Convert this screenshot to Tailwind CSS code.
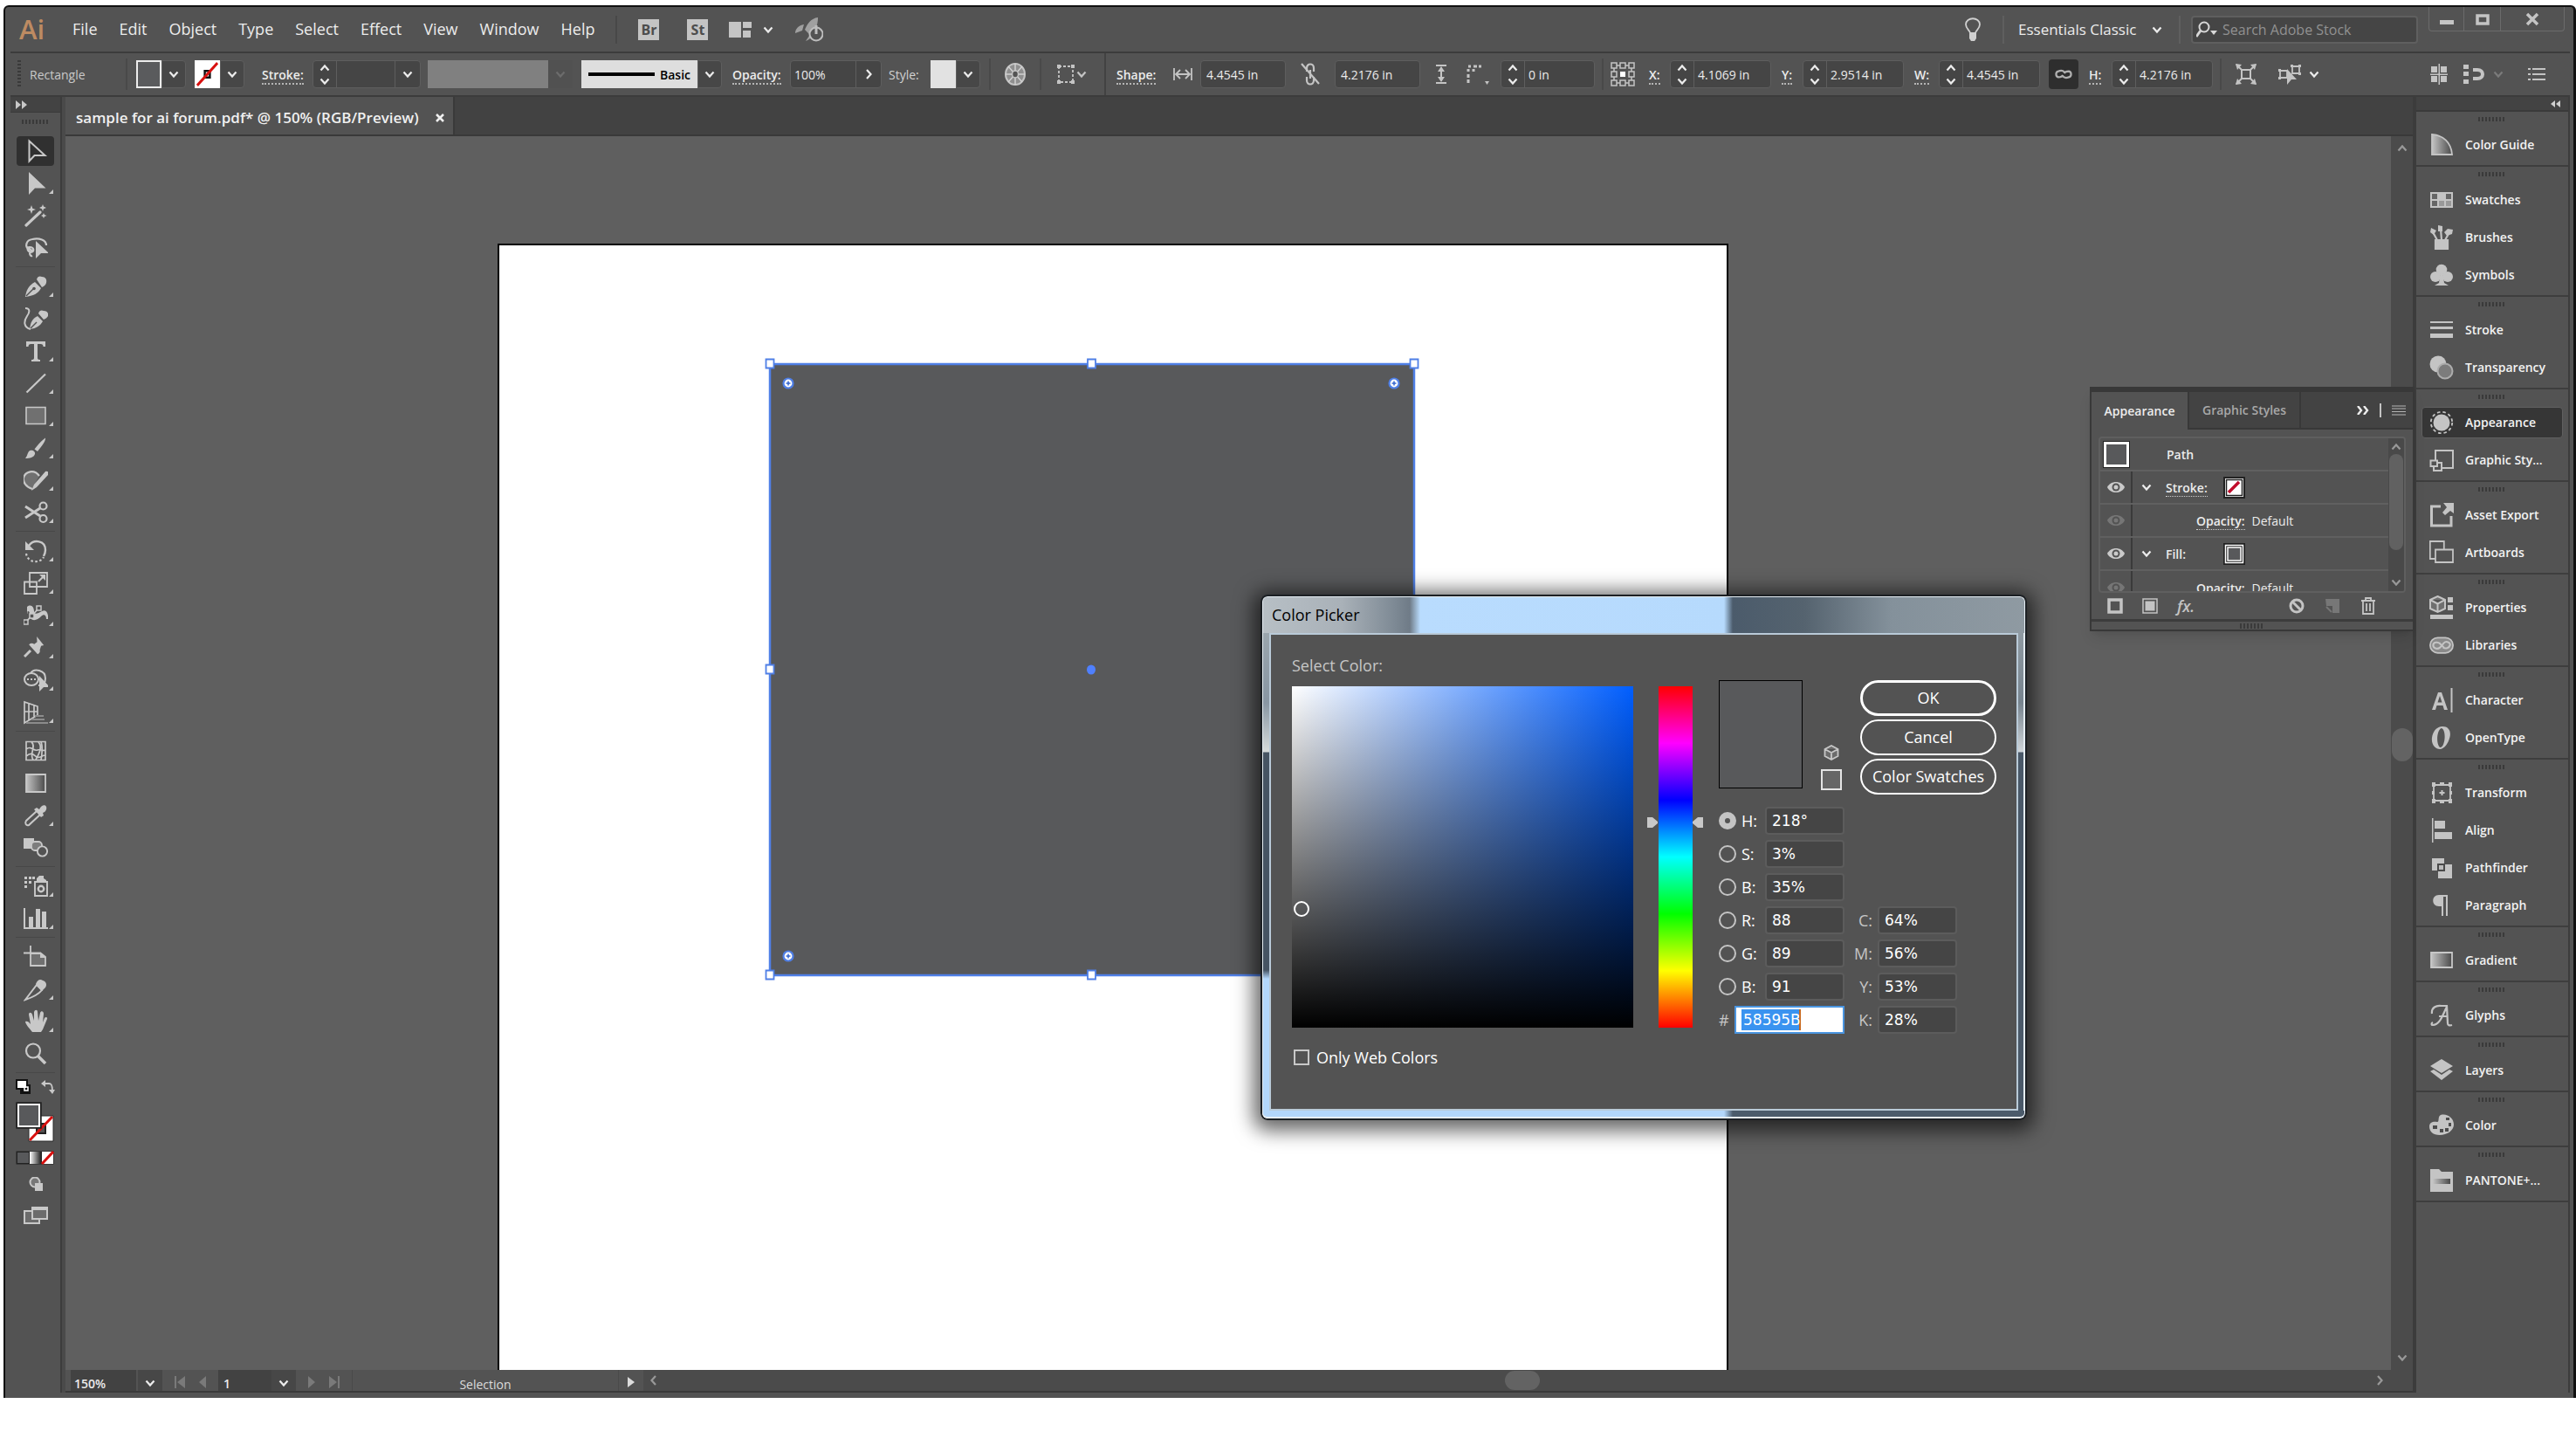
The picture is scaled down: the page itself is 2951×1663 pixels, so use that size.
<!DOCTYPE html>
<html lang="en">
<head>
    <meta charset="UTF-8">
    <meta name="viewport" content="width=device-width, initial-scale=1.0">
    <title>sample for ai forum.pdf - Illustrator</title>
    <script src="https://cdn.jsdelivr.net/npm/@tailwindcss/browser@4"></script>
</head>
<body class="bg-white h-screen flex flex-col pt-1.5 pl-1 pb-[62px] font-['Open_Sans','Noto_Sans',sans-serif] text-[14px] text-[#ececec]">

    <!-- Icon sprite -->
    <svg class="absolute w-0 h-0" aria-hidden="true">
        <defs>
            <linearGradient id="g-lr"><stop offset="0" stop-color="#c4c4c4"/><stop offset="1" stop-color="#4a4a4a"/></linearGradient>
            <linearGradient id="g-wb"><stop offset="0" stop-color="#fff"/><stop offset="1" stop-color="#222"/></linearGradient>
        </defs>
        <!-- arrows -->
        <symbol id="down" viewBox="0 0 12 12"><path d="M1.500 3.500 6 8.500l4.500-5" fill="none" stroke="currentColor" stroke-width="2.200"/></symbol>
        <symbol id="up" viewBox="0 0 12 12"><path d="M1.500 8.500 6 3.500l4.500 5" fill="none" stroke="currentColor" stroke-width="2.200"/></symbol>
        <symbol id="right" viewBox="0 0 12 12"><path d="M4 1l4.500 5L4 11" fill="none" stroke="currentColor" stroke-width="2.200"/></symbol>
        <symbol id="left" viewBox="0 0 12 12"><path d="M8 1L3.500 6 8 11" fill="none" stroke="currentColor" stroke-width="2.200"/></symbol>
        <symbol id="none" viewBox="0 0 30 30" preserveAspectRatio="none"><path d="M0 0h30v30H0z" fill="#fff"/><path d="M12 11.500h6v7h-6z" fill="#fff" stroke="#111" stroke-width="2.500"/><path d="M3 27 27 3" stroke="#d8100f" stroke-width="3"/></symbol>
        <!-- tools -->
        <symbol id="t-select" viewBox="0 0 28 28"><path d="M6.500 2.500v23l6-6.500h12z" fill="none" stroke="currentColor" stroke-width="2"/></symbol>
        <symbol id="t-direct" viewBox="0 0 28 28"><path d="M6 1v26l7-7.500h12.500z" fill="currentColor"/></symbol>
        <symbol id="t-wand" viewBox="0 0 28 28"><path d="M3 25 19 10" stroke="currentColor" stroke-width="3.200" stroke-linecap="round"/><path d="M9 2l1.300 3.700L14 7l-3.700 1.300L9 12 7.700 8.300 4 7l3.700-1.300zM22 1l1 2.500L26 5l-3 1.200L22 9l-1-2.800L18 5l3-1.500zM23 11l1 2 2.500 1-2.500 1-1 2-1-2-2-1 2-1z" fill="currentColor"/></symbol>
        <symbol id="t-lasso" viewBox="0 0 28 28"><path d="M6 16C1 12 3 5 10 4c8-2 16 1 16 7M9 19c-5-1-6-6-2-6 5 0 6 5 1 6-2 1 0 5 2 4M5 14l6 4" fill="none" stroke="currentColor" stroke-width="2.200"/><path d="M14 6v20l6-6h9z" fill="currentColor"/></symbol>
        <symbol id="t-pen" viewBox="0 0 28 28"><path d="M2 26c1-8 4-13 11-17l7 7c-3 6-9 9-18 10z" fill="currentColor"/><path d="M3 25l8-8" stroke="#535353" stroke-width="1.500"/><circle cx="12" cy="16.500" r="1.800" fill="#535353"/><path d="M15 6c1-4 4-4 6-3 4 0 6 3 5 7-1 3-3 4-5 5z" fill="currentColor"/></symbol>
        <symbol id="t-curv" viewBox="0 0 28 28"><path d="M7 26c1-8 3-12 9-15l6 6c-3 5-7 8-15 9z" fill="currentColor"/><path d="M8 25l7-7" stroke="#535353" stroke-width="1.400"/><path d="M17 8c1-4 4-4 6-3 4 0 6 3 5 6-1 2-3 3-5 4z" fill="currentColor"/><path d="M2 2c6 0 5 5 2 9-4 6-4 13 4 15" fill="none" stroke="currentColor" stroke-width="2"/></symbol>
        <symbol id="t-type" viewBox="0 0 28 28"><path d="M3 3h22v6h-2.500c0-2-1-3-3-3H16v16c0 1.500 1 2 3 2v2H9v-2c2 0 3-.5 3-2V6H8.500c-2 0-3 1-3 3H3z" fill="currentColor"/></symbol>
        <symbol id="t-line" viewBox="0 0 28 28"><path d="M3.500 24.500 25 3.500" stroke="currentColor" stroke-width="2.200"/></symbol>
        <symbol id="t-rect" viewBox="0 0 28 28"><path d="M3 4.500h22v19H3z" fill="#707070" stroke="currentColor" stroke-width="1.600"/></symbol>
        <symbol id="t-brush" viewBox="0 0 28 28"><path d="M2 26c2-2 2-5 4-8 3-3 8 0 7 3-1 4-6 5-11 5z" fill="currentColor"/><path d="M12.500 15.500C16 11 20 6 25 2.500c.5 4-4 9-9 15.500z" fill="currentColor"/></symbol>
        <symbol id="t-shaper" viewBox="0 0 28 28"><path d="M10 24C3 22-1 16 0 11 2 4 12 1 18 9" fill="#707070" stroke="currentColor" stroke-width="2.200"/><path d="M9 26l3-7L25 4c2-1 5 1 4 3L15 22z" fill="currentColor"/></symbol>
        <symbol id="t-sciss" viewBox="0 0 28 28"><path d="M2 7l17 11M2 20 19 9" stroke="currentColor" stroke-width="3"/><ellipse cx="22.500" cy="6.500" rx="4" ry="4" fill="none" stroke="currentColor" stroke-width="2.200"/><ellipse cx="22.500" cy="21" rx="4" ry="4" fill="none" stroke="currentColor" stroke-width="2.200"/></symbol>
        <symbol id="t-rotate" viewBox="0 0 28 28"><path d="M6 8C12 0 25 2 25 13c0 3-1 5-2 7" fill="none" stroke="currentColor" stroke-width="2.400"/><path d="M2 3v10h10z" fill="currentColor"/><path d="M3 17c2 12 17 11 20 4" fill="none" stroke="currentColor" stroke-width="2.200" stroke-dasharray="2.500 2.500"/></symbol>
        <symbol id="t-scale" viewBox="0 0 28 28"><path d="M7 2h20v16H7zM1 12.500h14V26H1z" fill="none" stroke="currentColor" stroke-width="1.800"/><path d="M17 12l5-5" stroke="currentColor" stroke-width="2"/><path d="M18 4h7v7z" fill="currentColor"/></symbol>
        <symbol id="t-width" viewBox="0 0 28 28"><path d="M4 4c5-4 8 1 8 5s4 3 9 0c4-2 6 0 7 5v4h-2c0-5-3-6-6-3-4 4-9 6-12 2-2-3 0-8-3-8-1 0 0 3-1 3z" fill="currentColor"/><path d="M2 22 18 5" stroke="currentColor" stroke-width="1.800"/><path d="M0 19h5v5H0zM7 12h5v5H7zM15 3h5v5h-5z" fill="#535353" stroke="currentColor" stroke-width="1.500"/></symbol>
        <symbol id="t-puppet" viewBox="0 0 28 28"><path d="M14 1l9 9-3 1-1 5c1 2 0 4-2 5L6 11c2-2 4-2 6-1l3-3z" fill="currentColor" transform="rotate(6 14 12)"/><path d="M8 17 1 24" stroke="currentColor" stroke-width="3"/></symbol>
        <symbol id="t-builder" viewBox="0 0 28 28"><ellipse cx="9" cy="13" rx="8" ry="7" fill="none" stroke="currentColor" stroke-width="2"/><path d="M8 6c4-6 17-4 17 6 0 5-3 8-8 8" fill="none" stroke="currentColor" stroke-width="2"/><path d="M4 13h14" stroke="currentColor" stroke-width="1.800" stroke-dasharray="2 2"/><path d="M18 9v18l5-5h7z" fill="currentColor"/></symbol>
        <symbol id="t-persp" viewBox="0 0 28 28"><path d="M1 2v24l15-9V7zM1 13h15M6 3.500v19M12 5.500v13" fill="none" stroke="currentColor" stroke-width="1.700"/><path d="M13 18h10M9 22h15M3 26h26" stroke="#8c8c8c" stroke-width="1.800"/></symbol>
        <symbol id="t-mesh" viewBox="0 0 28 28"><path d="M3 3.500h22v21H3zM3 12c6-5 8 3 13 1s5 2 9 0M3 20c6-5 8-2 12 1 3 2 6-2 10-2M9 4c6 4-3 14 2 20M17 4c5 5 1 13-3 20M20 4c2 4 1 16 0 20" fill="none" stroke="currentColor" stroke-width="1.700"/></symbol>
        <symbol id="t-grad" viewBox="0 0 28 28"><path d="M3 4h22v20H3z" fill="url(#g-lr)" stroke="#c8c8c8" stroke-width="1.800"/></symbol>
        <symbol id="t-eye" viewBox="0 0 28 28"><path d="M15 9 3 20c-2 3 0 6 3 5l13-12" fill="none" stroke="currentColor" stroke-width="2"/><path d="M12 7l3-2 3 2c2-5 7-6 8-3s-1 6-4 7l1 3-3 2z" fill="currentColor"/></symbol>
        <symbol id="t-blend" viewBox="0 0 28 28"><path d="M0 3h12v12H0z" fill="currentColor"/><rect x="9" y="7" width="12" height="10" rx="4" fill="#7d7d7d" stroke="currentColor" stroke-width="1.800"/><circle cx="21.500" cy="18" r="5.600" fill="#535353" stroke="currentColor" stroke-width="1.900"/></symbol>
        <symbol id="t-spray" viewBox="0 0 28 28"><path d="M13 9h14v16H13z" fill="none" stroke="currentColor" stroke-width="1.900"/><path d="M15 5l3-3h5v3l3 2v2H15z" fill="currentColor"/><circle cx="20" cy="17" r="3.200" fill="none" stroke="currentColor" stroke-width="2.400"/><path d="M1 3h3v3H1zM6 3h3v3H6zM10 3h3v3h-3zM1 8h3v3H1zM6 8h3v3H6zM1 13h3v3H1z" fill="currentColor"/></symbol>
        <symbol id="t-graph" viewBox="0 0 28 28"><path d="M0 2h2v22h26v2H0zM6 12h5v12H6zM14 3h5v21h-5zM21 6h5v18h-5z" fill="currentColor"/></symbol>
        <symbol id="t-artb" viewBox="0 0 28 28"><path d="M8 10h12l5 4v10H8z" fill="#707070" stroke="currentColor" stroke-width="1.800"/><path d="M0 9.500h20M8 1v9" stroke="currentColor" stroke-width="1.800"/><path d="M19 9v6h7z" fill="currentColor"/></symbol>
        <symbol id="t-slice" viewBox="0 0 28 28"><path d="M2 26 15 9l6 6c-4 5-10 8-19 11z" fill="none" stroke="currentColor" stroke-width="2"/><path d="M14 8c2-5 5-6 8-4 4 1 5 5 3 8l-4 4z" fill="currentColor"/></symbol>
        <symbol id="t-hand" viewBox="0 0 28 28"><path d="M10 26c-3-4-8-9-8-12 2-1 4 0 6 3L6 6c0-3 3-3 4 0l2 7V3c1-3 4-3 4 0l1 10 2-9c1-3 4-2 4 1l-1 10 2-5c1-2 4-1 3 1l-5 12-2 3z" fill="currentColor"/></symbol>
        <symbol id="t-zoom" viewBox="0 0 28 28"><ellipse cx="11" cy="10.500" rx="8" ry="8" fill="none" stroke="currentColor" stroke-width="2.200"/><path d="M16.500 16.500 25 25" stroke="currentColor" stroke-width="3.600"/></symbol>
        <!-- dock panels -->
        <symbol id="p-guide" viewBox="0 0 28 28"><path d="M3 2c13 1 22 9 23 23H3z" fill="url(#g-lr)" stroke="#c4c4c4" stroke-width="1.800"/></symbol>
        <symbol id="p-swatches" viewBox="0 0 28 28"><path d="M1 5h26v18H1z" fill="currentColor"/><path d="M3 7h6v6H3zM19 7h6v6h-6zM3 15h6v6H3z" fill="#666"/><path d="M11 15h6v6h-6zM19 15h6v6h-6z" fill="#999"/></symbol>
        <symbol id="p-brushes" viewBox="0 0 28 28"><path d="M7 17h14v11H7zM3 6l6 11M13 4l1 13M23 8l-5 9" fill="currentColor" stroke="currentColor" stroke-width="2.200"/><path d="M2 3l6 3-3 5-4-3zM10 0l5 1v6h-5zM17 8l4-4 6 1-1 5-6 2z" fill="currentColor"/></symbol>
        <symbol id="p-symbols" viewBox="0 0 28 28"><circle cx="14" cy="8" r="6.300" fill="currentColor"/><circle cx="7" cy="16" r="6" fill="currentColor"/><circle cx="21" cy="16" r="6" fill="currentColor"/><path d="M12.500 12h3l1.500 11 5 3H6l5-3z" fill="currentColor"/></symbol>
        <symbol id="p-stroke" viewBox="0 0 28 28"><path d="M1 4h26v2H1zM1 10h26v3H1zM1 18h26v5H1z" fill="currentColor"/></symbol>
        <symbol id="p-transp" viewBox="0 0 28 28"><circle cx="10" cy="10" r="9.500" fill="currentColor"/><circle cx="18" cy="18" r="8.500" fill="#7c7c7c" stroke="#adadad" stroke-width="2"/></symbol>
        <symbol id="p-appear" viewBox="0 0 28 28"><circle cx="14" cy="14" r="9.500" fill="currentColor"/><circle cx="14" cy="14" r="12.200" fill="none" stroke="currentColor" stroke-width="1.800" stroke-dasharray="3.500 3"/></symbol>
        <symbol id="p-styles" viewBox="0 0 28 28"><path d="M7 14V3h20v20H14" fill="none" stroke="currentColor" stroke-width="2"/><path d="M1.500 14.500H9V21H1.500zM5 21v5h9v-9H9" fill="none" stroke="currentColor" stroke-width="2"/></symbol>
        <symbol id="p-export" viewBox="0 0 28 28"><path d="M13 4H2.500v22H25V15" fill="none" stroke="currentColor" stroke-width="3"/><path d="M16 0h12v12l-4-3-6 5-3-3 5-6z" fill="currentColor"/></symbol>
        <symbol id="p-artboards" viewBox="0 0 28 28"><path d="M7 21H.8V1h16v9M7 10.500h20V25H7z" fill="none" stroke="currentColor" stroke-width="1.800"/></symbol>
        <symbol id="p-props" viewBox="0 0 28 28"><path d="M9.500 1 18 5v10l-8.500 4L1 15V5zM1 5l8.500 4.500L18 5M9.500 9.500V19" fill="#6f6f6f" stroke="currentColor" stroke-width="2"/><path d="M21 2h6v6h-6zM21 11h6v6h-6zM1 22h26v5H1z" fill="currentColor"/></symbol>
        <symbol id="p-libs" viewBox="0 0 32 28"><rect x="1" y="4" width="30" height="20" rx="10" fill="#8a8a8a" stroke="currentColor" stroke-width="2"/><path d="M19 17l-5-5c-3-3-9-2-9 2s5 6 9 3l5-6c3-3 9-1 8 3s-6 5-9 3" fill="none" stroke="currentColor" stroke-width="2.400"/></symbol>
        <symbol id="p-char" viewBox="0 0 28 28"><path d="M3 25 10 5h4l7 20h-4l-1.500-5h-7L7 25zM9.500 16.500h5L12 9z" fill="currentColor" fill-rule="evenodd"/><path d="M25.500 0v28" stroke="currentColor" stroke-width="2"/></symbol>
        <symbol id="p-open" viewBox="0 0 28 28"><path d="M15 1c7 0 10 5 8.500 12S17 27 12 27 2 22 3 14 9 1 15 1zm-1 2C9 4 7 20 12 25c6 1 8-20 2-22z" fill="currentColor" fill-rule="evenodd"/></symbol>
        <symbol id="p-transform" viewBox="0 0 28 28"><path d="M5 5h19v18H5z" fill="none" stroke="currentColor" stroke-width="1.800"/><path d="M3 2h4v5H3zM12 2h5v4h-5zM22 2h4v5h-4zM3 21h4v5H3zM12 22h5v4h-5zM22 21h4v5h-4zM3 12h3v4H3zM23 12h3v4h-3zM13.500 11h2v2h2v2h-2v2h-2v-2h-2v-2h2z" fill="currentColor"/></symbol>
        <symbol id="p-align" viewBox="0 0 28 28"><path d="M3 0h1.500v28H3zM6 3h12v9H6zM6 16h20v8H6z" fill="currentColor"/></symbol>
        <symbol id="p-path" viewBox="0 0 28 28"><path d="M3 3h14v14H3zM10 10h16v16H10z" fill="currentColor"/><path d="M10 10h7v7h-7z" fill="#bbb" stroke="#4a4a4a" stroke-width="2"/></symbol>
        <symbol id="p-para" viewBox="0 0 28 28"><path d="M11 2h10v24h-2V4h-3v22h-2V15h-3C2 15 2 2 11 2z" fill="currentColor"/></symbol>
        <symbol id="p-grad" viewBox="0 0 28 28"><path d="M2 5h24v17H2z" fill="url(#g-lr)" stroke="#c8c8c8" stroke-width="1.800"/></symbol>
        <symbol id="p-glyphs" viewBox="0 0 28 28"><path d="M3 12C2 5 8 2 14 3h7M20 3l1 20c0 2 2 3 5 2M20 4C15 14 12 25 4 25c-2 0-2-2 0-3M11 15h10" fill="none" stroke="currentColor" stroke-width="2.200"/></symbol>
        <symbol id="p-layers" viewBox="0 0 28 28"><path d="M14 1l13 8-13 8L1 9z" fill="currentColor"/><path d="M1 15l4-2 9 6 9-6 4 2-13 10z" fill="currentColor"/></symbol>
        <symbol id="p-color" viewBox="0 0 28 28"><path d="M0 15c0-5 5-6 9-5 3 0 0-6 4-8 8-2 15 4 15 11S20 25 12 25 0 21 0 15z" fill="currentColor"/><path d="M4 14h5v4H4zM12 18h4v4h-4zM18 17h4v4h-4zM22 11h3v4h-3zM19 5h4v3h-4z" fill="#4c4c4c"/></symbol>
        <symbol id="p-pantone" viewBox="0 0 28 28"><path d="M1 1h10l3 3h13v23H1z" fill="currentColor"/><path d="M4 12h20v6H4z" fill="url(#g-lr)"/></symbol>
        <symbol id="eye" viewBox="0 0 20 14"><path d="M0 7C4-1 16-1 20 7 16 15 4 15 0 7z" fill="currentColor"/><circle cx="10" cy="7" r="4.500" fill="#535353"/><circle cx="10" cy="7" r="2.500" fill="currentColor"/></symbol>
        <symbol id="chain" viewBox="0 0 24 14"><path d="M13 4C11 2 8 2 5 3c-4 1-4 7 0 8 3 0 5 0 6-3M11 10c2 2 5 2 8 1 4-1 4-7 0-8-3 0-5 0-6 3" fill="none" stroke="currentColor" stroke-width="2.600"/></symbol>
    </svg>

    <!-- Application window -->
    <div class="relative flex-1 min-h-0 flex flex-col bg-[#535353] border-t-2 border-l-2 border-r-[3px] border-[#111] pl-1.5 pr-1 pb-1.5 rounded-t-md">

        <!-- Menu bar -->
        <header class="h-[51px] shrink-0 flex items-center text-[18px]">
            <span class="ml-2.5 w-[61px] text-[31px] leading-none font-semibold text-[#bd8b62]">Ai</span>
            <nav class="flex gap-[25px]" aria-label="Main menu">
                <button>File</button><button>Edit</button><button>Object</button><button>Type</button><button>Select</button><button>Effect</button><button>View</button><button>Window</button><button>Help</button>
            </nav>
            <span class="ml-6 w-0.5 h-8 bg-[#484848]"></span>
            <button class="ml-6 w-6 h-6 bg-[#c4c4c4] text-[#4d4d4d] text-[16px] leading-none font-bold">Br</button>
            <button class="ml-8 w-6 h-6 bg-[#c4c4c4] text-[#4d4d4d] text-[16px] leading-none font-bold">St</button>
            <button class="ml-6 flex items-center gap-3" aria-label="Arrange documents">
                <svg class="w-[26px] h-[18px] text-[#c4c4c4]" viewBox="0 0 26 18"><path d="M0 0h14v18H0zM16 0h10v7H16zM16 10h9v8h-9z" fill="currentColor"/></svg>
                <svg class="w-3.5 h-3"><use href="#down"/></svg>
            </button>
            <button class="ml-6" aria-label="GPU performance">
                <svg class="w-8 h-7 text-[#a0a0a0]" viewBox="0 0 32 28"><path d="M26 0c-8 1-12 7-15 14l6 6c6-4 9-11 9-20zM10 8C4 9 0 13 0 18l8-3zM16 21l-4 6c3-1 6-3 7-6z" fill="currentColor"/><circle cx="24" cy="19" r="7.500" fill="#535353" stroke="#bdbdbd" stroke-width="2"/><path d="M24 9v10" stroke="#bdbdbd" stroke-width="3"/></svg>
            </button>

            <button class="ml-auto" aria-label="Learn">
                <svg class="w-5 h-7 text-[#d0d0d0]" viewBox="0 0 20 28"><path d="M7 18c0-3-5-5-5-10 0-9 16-9 16 0 0 5-5 7-5 10z" fill="none" stroke="currentColor" stroke-width="1.800"/><path d="M6 18h8v6l-2 3H8l-2-3z" fill="currentColor"/></svg>
            </button>
            <span class="ml-6 w-0.5 h-8 bg-[#5f5f5f]"></span>
            <label class="ml-4 flex items-center w-[168px]">
                <span class="sr-only">Workspace</span>
                <select class="appearance-none h-8 bg-transparent w-[152px] text-[17px] outline-none"><option>Essentials Classic</option></select>
                <svg class="w-3.5 h-3 shrink-0"><use href="#down"/></svg>
            </label>
            <span class="ml-4 w-0.5 h-8 bg-[#5f5f5f]"></span>
            <label class="ml-3 w-[260px] h-8 flex items-center bg-[#454545] border-2 border-[#5f5f5f] rounded px-1">
                <svg class="w-6 h-5 shrink-0" viewBox="0 0 24 20"><circle cx="9" cy="7" r="5.500" fill="none" stroke="#d8d8d8" stroke-width="2"/><path d="M5 11l-5 7" stroke="#d8d8d8" stroke-width="3"/><path d="M16 11h8l-4 5z" fill="#d8d8d8"/></svg>
                <span class="sr-only">Search</span>
                <input class="ml-1.5 w-full h-full bg-transparent text-[16px] outline-none placeholder:text-[#919191]" placeholder="Search Adobe Stock">
            </label>
            <div class="ml-3 mr-1.5 self-start flex h-7 w-[156px] border border-t-0 border-[#6b6b6b] rounded-b divide-x divide-[#6b6b6b] text-[#c4c4c4]">
                <button class="w-10 flex items-center justify-center" aria-label="Minimize"><svg class="w-4 h-4" viewBox="0 0 16 16"><path d="M0 9h16v5H0z" fill="currentColor"/></svg></button>
                <button class="w-[42px] flex items-center justify-center" aria-label="Maximize"><svg class="w-4 h-4" viewBox="0 0 16 16"><path d="M2 4h12v9H2z" fill="none" stroke="currentColor" stroke-width="3.500"/></svg></button>
                <button class="flex-1 flex items-center justify-center" aria-label="Close"><svg class="w-4 h-4" viewBox="0 0 16 16"><path d="M2 2l12 12M14 2 2 14" stroke="currentColor" stroke-width="3.500"/></svg></button>
            </div>
        </header>

        <!-- Control bar -->
        <div class="h-[52px] shrink-0 flex items-center border-y-2 border-[#3c3c3c] text-[14px]" id="control-bar">
            <span class="ml-2 w-1 h-8 bg-[repeating-linear-gradient(to_bottom,#3a3a3a_0_2px,transparent_2px_4px)]"></span>
            <span class="ml-2.5 w-[110px] text-[#c9c9c9]">Rectangle</span>
            <span class="w-0.5 h-9 bg-[#494949]"></span>
            <button class="ml-2.5 flex h-8" aria-label="Fill color">
                <span class="w-[29px] bg-[#5a5b5d] border-2 border-[#ececec]"></span>
                <span class="w-7 flex items-center justify-center bg-[#474747] border border-[#5e5e5e] rounded-r"><svg class="w-3 h-3"><use href="#down"/></svg></span>
            </button>
            <button class="ml-2.5 flex h-8" aria-label="Stroke color">
                <svg class="w-[29px] h-8"><use href="#none"/></svg>
                <span class="w-7 flex items-center justify-center bg-[#474747] border border-[#5e5e5e] rounded-r"><svg class="w-3 h-3"><use href="#down"/></svg></span>
            </button>
            <label for="stroke-w" class="ml-5 w-12 font-semibold"><span class="border-b-2 border-dotted border-[#b5b5b5]">Stroke:</span></label>
            <div class="ml-2.5 w-[124px] h-8 flex bg-[#454545] border border-[#5e5e5e] rounded divide-x divide-[#5e5e5e]">
                <span class="w-[27px] flex flex-col items-center justify-around shrink-0"><svg class="w-3 h-3"><use href="#up"/></svg><svg class="w-3 h-3"><use href="#down"/></svg></span>
                <input id="stroke-w" class="flex-1 min-w-0 bg-transparent px-1.5 outline-none">
                <button class="w-7 flex items-center justify-center shrink-0" aria-label="Stroke weights"><svg class="w-3 h-3"><use href="#down"/></svg></button>
            </div>
            <button class="ml-2 flex h-8" aria-label="Variable width profile" disabled>
                <span class="w-[138px] bg-[#808080]"></span><span class="w-7 flex items-center justify-center bg-[#515151] text-[#6c6c6c]"><svg class="w-3 h-3"><use href="#down"/></svg></span>
            </button>
            <button class="ml-2.5 flex h-8">
                <span class="w-[133px] pl-2 pr-2 flex items-center gap-1.5 bg-[#dedede] text-black font-semibold"><span class="flex-1 h-1 bg-black"></span>Basic</span>
                <span class="w-7 flex items-center justify-center bg-[#474747] border border-[#5e5e5e] rounded-r"><svg class="w-3 h-3"><use href="#down"/></svg></span>
            </button>
            <label for="opacity" class="ml-3 w-14 font-semibold"><span class="border-b-2 border-dotted border-[#b5b5b5]">Opacity:</span></label>
            <div class="ml-2.5 w-[105px] h-8 flex bg-[#454545] border border-[#5e5e5e] rounded divide-x divide-[#5e5e5e]">
                <input id="opacity" class="flex-1 min-w-0 bg-transparent px-1 outline-none" value="100%">
                <button class="w-7 flex items-center justify-center shrink-0" aria-label="Opacity slider"><svg class="w-3 h-3"><use href="#right"/></svg></button>
            </div>
            <span class="ml-2 w-10 text-[#d2d2d2]">Style:</span>
            <button class="ml-2 flex h-8" aria-label="Graphic style">
                <span class="w-[29px] bg-[#e2e2e2]"></span>
                <span class="w-7 flex items-center justify-center bg-[#474747] border border-[#5e5e5e] rounded-r"><svg class="w-3 h-3"><use href="#down"/></svg></span>
            </button>
            <span class="ml-2.5 w-0.5 h-9 bg-[#494949]"></span>
            <button class="ml-4" aria-label="Recolor artwork"><svg class="w-6 h-[26px]" viewBox="0 0 24 26"><ellipse cx="12" cy="13" rx="11" ry="12" fill="#8f8f8f" stroke="#c4c4c4" stroke-width="2"/><path d="M12 1v24M1 13h22M4 4l16 18M20 4 4 22" stroke="#d0d0d0" stroke-width="1.500"/><ellipse cx="12" cy="13" rx="3.500" ry="4" fill="#535353" stroke="#c4c4c4" stroke-width="1.500"/></svg></button>
            <span class="ml-4 w-0.5 h-9 bg-[#494949]"></span>
            <button class="ml-4 w-10 flex items-center text-[#c4c4c4]" aria-label="Align to"><svg class="w-6 h-6" viewBox="0 0 24 24"><path d="M4 3h16v18H4z" fill="none" stroke="currentColor" stroke-width="1.800" stroke-dasharray="3 2"/><path d="M2 1h4v4H2zM18 1h4v4h-4zM2 19h4v4H2zM18 19h4v4h-4z" fill="currentColor"/></svg><svg class="w-3 h-3"><use href="#down"/></svg></button>
            <span class="ml-4 w-0.5 h-12 bg-[#424242]"></span>
            <span class="ml-3 w-12 font-semibold"><span class="border-b-2 border-dotted border-[#b5b5b5]">Shape:</span></span>
            <svg class="ml-4 w-6 h-4 text-[#c4c4c4]" viewBox="0 0 24 16"><path d="M2 1v14M22 1v14M4 8h16M9 3 4 8l5 5M15 3l5 5-5 5" fill="none" stroke="currentColor" stroke-width="1.800"/></svg>
            <input class="ml-2 w-[98px] h-8 bg-[#454545] border border-[#5e5e5e] rounded px-1.5 outline-none" aria-label="Shape width" value="4.4545 in">
            <button class="ml-4" aria-label="Constrain shape"><svg class="w-6 h-[26px] text-[#c4c4c4]" viewBox="0 0 24 26"><path d="M8 10V6c0-6 8-6 8 0v4M8 16v4c0 6 8 6 8 0v-4M12 8v10M2 1l20 23" fill="none" stroke="currentColor" stroke-width="2.200"/></svg></button>
            <input class="ml-4 w-[98px] h-8 bg-[#454545] border border-[#5e5e5e] rounded px-1.5 outline-none" aria-label="Shape height" value="4.2176 in">
            <svg class="ml-3 w-6 h-6 text-[#c4c4c4]" viewBox="0 0 24 24"><path d="M6 2h12M6 22h12M12 4v16" fill="none" stroke="currentColor" stroke-width="2"/><path d="M12 3l4 6H8zM12 21l4-6H8z" fill="currentColor"/></svg>
            <svg class="ml-4 w-7 h-6 text-[#c4c4c4]" viewBox="0 0 28 24"><path d="M3 22V12M3 9V6M9 9V6M9 3h9M3 3h3" fill="none" stroke="currentColor" stroke-width="3" stroke-dasharray="4 2"/><path d="M22 20h5l-2.500 4z" fill="currentColor"/></svg>
            <div class="ml-3 w-[108px] h-8 flex bg-[#454545] border border-[#5e5e5e] rounded divide-x divide-[#5e5e5e]">
                <span class="w-[27px] flex flex-col items-center justify-around shrink-0"><svg class="w-3 h-3"><use href="#up"/></svg><svg class="w-3 h-3"><use href="#down"/></svg></span>
                <input class="flex-1 min-w-0 bg-transparent px-1 outline-none" aria-label="Corner radius" value="0 in">
            </div>
            <span class="ml-2 w-0.5 h-9 bg-[#494949]"></span>
            <svg class="ml-2 w-7 h-7 text-[#c4c4c4]" viewBox="0 0 28 28"><path d="M4 4h20v20H4z" fill="none" stroke="currentColor" stroke-width="1.500"/><path d="M1 1h6v6H1zM11 1h6v6h-6zM21 1h6v6h-6zM1 11h6v6H1zM21 11h6v6h-6zM1 21h6v6H1zM11 21h6v6h-6zM21 21h6v6h-6z" fill="#535353" stroke="currentColor" stroke-width="1.500"/><path d="M11 11h6v6h-6z" fill="#fff"/></svg>
            <label for="pos-x" class="ml-4 w-3.5 font-semibold"><span class="border-b-2 border-dotted border-[#b5b5b5]">X:</span></label>
            <div class="ml-2.5 w-[116px] h-8 flex bg-[#454545] border border-[#5e5e5e] rounded divide-x divide-[#5e5e5e]">
                <span class="w-[27px] flex flex-col items-center justify-around shrink-0"><svg class="w-3 h-3"><use href="#up"/></svg><svg class="w-3 h-3"><use href="#down"/></svg></span>
                <input id="pos-x" class="flex-1 min-w-0 bg-transparent px-1 outline-none" value="4.1069 in">
            </div>
            <label for="pos-y" class="ml-3 w-3.5 font-semibold"><span class="border-b-2 border-dotted border-[#b5b5b5]">Y:</span></label>
            <div class="ml-2.5 w-[116px] h-8 flex bg-[#454545] border border-[#5e5e5e] rounded divide-x divide-[#5e5e5e]">
                <span class="w-[27px] flex flex-col items-center justify-around shrink-0"><svg class="w-3 h-3"><use href="#up"/></svg><svg class="w-3 h-3"><use href="#down"/></svg></span>
                <input id="pos-y" class="flex-1 min-w-0 bg-transparent px-1 outline-none" value="2.9514 in">
            </div>
            <label for="size-w" class="ml-3 w-[18px] font-semibold"><span class="border-b-2 border-dotted border-[#b5b5b5]">W:</span></label>
            <div class="ml-2.5 w-[116px] h-8 flex bg-[#454545] border border-[#5e5e5e] rounded divide-x divide-[#5e5e5e]">
                <span class="w-[27px] flex flex-col items-center justify-around shrink-0"><svg class="w-3 h-3"><use href="#up"/></svg><svg class="w-3 h-3"><use href="#down"/></svg></span>
                <input id="size-w" class="flex-1 min-w-0 bg-transparent px-1 outline-none" value="4.4545 in">
            </div>
            <button class="ml-2.5 w-[34px] h-[34px] flex items-center justify-center bg-[#2e2e2e] rounded text-[#b0b0b0]" aria-label="Constrain proportions"><svg class="w-6 h-3"><use href="#chain"/></svg></button>
            <label for="size-h" class="ml-3 w-4 font-semibold"><span class="border-b-2 border-dotted border-[#b5b5b5]">H:</span></label>
            <div class="ml-2.5 w-[116px] h-8 flex bg-[#454545] border border-[#5e5e5e] rounded divide-x divide-[#5e5e5e]">
                <span class="w-[27px] flex flex-col items-center justify-around shrink-0"><svg class="w-3 h-3"><use href="#up"/></svg><svg class="w-3 h-3"><use href="#down"/></svg></span>
                <input id="size-h" class="flex-1 min-w-0 bg-transparent px-1 outline-none" value="4.2176 in">
            </div>
            <span class="ml-2 w-0.5 h-9 bg-[#494949]"></span>
            <button class="ml-4" aria-label="Isolate"><svg class="w-6 h-6 text-[#c4c4c4]" viewBox="0 0 24 24"><path d="M7 7h10v10H7z" fill="none" stroke="currentColor" stroke-width="2"/><path d="M0 0l7 1-5 6zM24 0l-7 1 5 6zM0 24l7-1-5-6zM24 24l-7-1 5-6z" fill="currentColor"/><path d="M1 1l6 6M23 1l-6 6M1 23l6-6M23 23l-6-6" stroke="currentColor" stroke-width="2"/></svg></button>
            <button class="ml-6 flex items-center gap-2" aria-label="Select similar"><svg class="w-7 h-6 text-[#c4c4c4]" viewBox="0 0 28 24"><path d="M3 8h8v8H3zM17 3h8v8h-8z" fill="none" stroke="currentColor" stroke-width="1.800"/><path d="M1 6h3v3H1zM1 15h3v3H1zM15 1h3v3h-3zM24 1h3v3h-3zM24 10h3v3h-3zM11 6v18l5-6h6z" fill="currentColor"/></svg><svg class="w-3 h-3"><use href="#down"/></svg></button>

            <button class="ml-auto" aria-label="Align panel"><svg class="w-5 h-6 text-[#c4c4c4]" viewBox="0 0 20 24"><path d="M1 3h7v7H1zM12 3h7v7h-7zM1 14h7v7H1zM12 14h7v7h-7zM9.500 0h1.500v24H9.500zM0 11.500h20V13H0z" fill="currentColor"/></svg></button>
            <button class="ml-4 flex items-center gap-2 text-[#c4c4c4]" aria-label="Snap options"><svg class="w-7 h-6" viewBox="0 0 28 24"><path d="M2 1h6v5H2zM2 9h6v5H2zM2 18h6v5H2z" fill="currentColor"/><path d="M13 7h5c8 0 8 10 0 10h-5" fill="none" stroke="currentColor" stroke-width="4"/></svg><svg class="w-3 h-3 text-[#7b7b7b]"><use href="#down"/></svg></button>
            <button class="ml-7 mr-7" aria-label="Control bar menu"><svg class="w-5 h-4 text-[#c4c4c4]" viewBox="0 0 20 16"><path d="M5 2h15M5 8h15M5 14h15M0 2h3M0 8h3M0 14h3" stroke="currentColor" stroke-width="1.800"/></svg></button>
        </div>

        <div class="flex-1 min-h-0 flex">

            <!-- Toolbox -->
            <aside class="w-[59px] shrink-0 border-r-2 border-[#3c3c3c] flex flex-col items-stretch text-[#c8c8c8]">
                <button class="h-[18px] bg-[#434343] border-b border-[#3a3a3a] pl-1.5 flex items-center" aria-label="Collapse tools"><svg class="w-3.5 h-2.5" viewBox="0 0 14 10"><path d="M0 0l6 5-6 5zM7 0l6 5-6 5z" fill="currentColor"/></svg></button>
                <span class="mt-2 mb-3 self-center w-8 h-[5px] bg-[repeating-linear-gradient(to_right,#3a3a3a_0_2px,transparent_2px_4px)]"></span>
                <div id="tools"></div>
                <div class="h-px mx-1.5 my-[3px] bg-[#484848]"></div>
                <div class="mt-1 px-1.5 flex justify-between">
                    <svg class="w-[18px] h-[18px]" viewBox="0 0 18 18"><path d="M5 6h12v11H5z" fill="#111"/><path d="M1 1h12v10H1z" fill="#fff" stroke="#111" stroke-width="2"/><path d="M10 9h4v4h-4z" fill="none" stroke="#fff" stroke-width="1.500"/></svg>
                    <svg class="w-4 h-[18px]" viewBox="0 0 16 18"><path d="M4 5h5c3 0 4 2 4 8" fill="none" stroke="currentColor" stroke-width="1.800"/><path d="M0 5l5-4v8zM13 17l-4-5h7z" fill="currentColor"/></svg>
                </div>
                <svg class="mt-2 ml-1.5 w-11 h-[46px] shrink-0" viewBox="0 0 44 46"><path d="M15 16h28v29H15z" fill="#fff" stroke="#2a2a2a"/><path d="M24 25h10v11H24z" fill="#535353" stroke="#222" stroke-width="2"/><path d="M16 44 42 17" stroke="#d8100f" stroke-width="3"/><path d="M1.500 1.500h27v28h-27z" fill="#5a5b5d" stroke="#222" stroke-width="2.500"/><path d="M3 3h24v25H3z" fill="#58595b" stroke="#fff" stroke-width="2"/></svg>
                <svg class="mt-2.5 ml-1.5 w-11 h-4 shrink-0" viewBox="0 0 44 16"><path d="M.5.5h43v15H.5z" fill="#222"/><path d="M2 2h13v12H2z" fill="#58595b"/><path d="M16 1h13v14H16z" fill="url(#g-wb)"/><path d="M30 1h13v14H30z" fill="#fff"/><path d="M30 15 43 1" stroke="#d8100f" stroke-width="3"/></svg>
                <svg class="mt-3.5 self-center w-4 h-4 shrink-0" viewBox="0 0 16 16"><circle cx="7" cy="6" r="5.500" fill="#777" stroke="currentColor" stroke-width="2"/><path d="M7 7h9v9H7z" fill="currentColor"/></svg>
                <svg class="mt-4 self-center w-7 h-6 shrink-0" viewBox="0 0 28 24"><path d="M1 7h17v14H1z" fill="#6c6c6c" stroke="currentColor" stroke-width="2"/><path d="M10 3h17v13H10z" fill="#6c6c6c" stroke="currentColor" stroke-width="2"/><path d="M9 2h19v4H9z" fill="currentColor"/></svg>
            </aside>

            <!-- Document -->
            <section class="flex-1 min-w-0 flex flex-col border-l-4 border-[#4a4a4a]">
                <div class="h-[45px] shrink-0 bg-[#424242] border-b-2 border-[#393939] flex">
                    <button class="w-[446px] pl-3 pr-2.5 pt-1 flex items-center justify-between bg-[#535353] border-r-2 border-[#3a3a3a] text-[17px] font-semibold text-[#f0f0f0]">
                        <span>sample for ai forum.pdf* @ 150% (RGB/Preview)</span>
                        <svg class="w-2.5 h-2.5" viewBox="0 0 10 10"><path d="M1 1l8 8M9 1 1 9" stroke="currentColor" stroke-width="2.500"/></svg>
                    </button>
                </div>
                <div class="flex-1 min-h-0 flex">
                    <main class="relative flex-1 min-w-0 overflow-hidden bg-[#5f5f5f]">
                        <!-- artboard -->
                        <div class="absolute left-[495px] top-[123px] w-[1410px] h-[1600px] bg-white border-2 border-black"></div>
                        <!-- selected rectangle -->
                        <svg class="absolute left-[796px] top-[249px] w-[760px] h-[724px]" viewBox="0 0 760 724">
                            <rect x="11" y="12" width="738" height="700" fill="#58595b" stroke="#4f7fe6" stroke-width="2.500"/>
                            <g fill="#fff" stroke="#4f7fe6" stroke-width="1.800"><path d="M6.500 6.500h9v10h-9zM375 6.500h9v10h-9zM744.500 6.500h9v10h-9zM6.500 356.500h9v10h-9zM6.500 706.500h9v10h-9zM375 706.500h9v10h-9z"/></g>
                            <ellipse cx="379" cy="362" rx="5" ry="5.500" fill="#4f80ff"/>
                            <g fill="#fff" stroke="#4f7fe6" stroke-width="2.200"><circle cx="32" cy="34" r="5.500"/><circle cx="726" cy="34" r="5.500"/><circle cx="32" cy="690" r="5.500"/></g>
                            <path d="M29.500 34h5M32 31.500v5M723.500 34h5M726 31.500v5M29.500 690h5M32 687.500v5" stroke="#3565d0" stroke-width="1.500"/>
                        </svg>
                    </main>
                    <!-- vertical scrollbar -->
                    <div class="w-[25px] shrink-0 bg-[#4b4b4b] flex flex-col items-center justify-between py-2 text-[#999]">
                        <svg class="w-3.5 h-3"><use href="#up"/></svg>
                        <span class="mb-5 w-6 h-[38px] rounded-full bg-[#636363]"></span>
                        <svg class="w-3.5 h-3"><use href="#down"/></svg>
                    </div>
                </div>
                <!-- Status bar -->
                <footer class="h-[26px] shrink-0 flex items-stretch bg-[#535353] border-b-2 border-[#3a3a3a] text-[14px]">
                    <input class="ml-1.5 w-[75px] pl-1 pt-1.5 bg-[#424242] outline-none font-semibold" aria-label="Zoom level" value="150%">
                    <button class="w-7 ml-0.5 pt-1.5 bg-[#474747] flex items-center justify-center" aria-label="Zoom presets"><svg class="w-3 h-3"><use href="#down"/></svg></button>
                    <div class="w-16 pt-1 flex items-center justify-center gap-4 text-[#7a7a7a]">
                        <svg class="w-3 h-3.5" viewBox="0 0 12 14"><path d="M0 0h2v14H0zM12 0v14L3 7z" fill="currentColor"/></svg>
                        <svg class="w-2 h-3.5" viewBox="0 0 8 14"><path d="M8 0v14L0 7z" fill="currentColor"/></svg>
                    </div>
                    <input class="w-[61px] pl-1.5 pt-1.5 bg-[#424242] outline-none font-semibold" aria-label="Artboard number" value="1">
                    <button class="w-7 pt-1.5 bg-[#474747] flex items-center justify-center" aria-label="Artboard list"><svg class="w-3 h-3"><use href="#down"/></svg></button>
                    <div class="w-16 pt-1 flex items-center justify-center gap-4 text-[#7a7a7a]">
                        <svg class="w-2 h-3.5" viewBox="0 0 8 14"><path d="M0 0v14l8-7z" fill="currentColor"/></svg>
                        <svg class="w-3 h-3.5" viewBox="0 0 12 14"><path d="M10 0h2v14h-2zM0 0v14l9-7z" fill="currentColor"/></svg>
                    </div>
                    <button class="w-[306px] pt-1.5 border-x border-[#4a4a4a] text-center text-[#dcdcdc]">Selection</button>
                    <span class="w-7 pt-1 flex items-center justify-center"><svg class="w-2 h-3" viewBox="0 0 8 12"><path d="M0 0v12l8-6z" fill="#dcdcdc"/></svg></span>
                    <div class="flex-1 bg-[#4b4b4b] flex items-center justify-between pl-1.5 pr-8 text-[#999]">
                        <svg class="w-3 h-3"><use href="#left"/></svg>
                        <span class="ml-3 w-10 h-[22px] rounded-full bg-[#636363]"></span>
                        <svg class="w-3 h-3"><use href="#right"/></svg>
                    </div>
                </footer>
            </section>

            <!-- Panel dock -->
            <aside class="w-[180px] shrink-0 border-x-2 border-l-4 border-[#3c3c3c] flex flex-col">
                <button class="h-[17px] shrink-0 bg-[#434343] border-b-2 border-[#3a3a3a] pr-2 flex items-center justify-end" aria-label="Expand panels"><svg class="w-3 h-2" viewBox="0 0 12 8"><path d="M5 0v8L0 4zM11 0v8L6 4z" fill="#d0d0d0"/></svg></button>
                <div id="dock"></div>
            </aside>
        </div>

        <!-- Appearance panel -->
        <section class="absolute right-[182px] top-[435px] w-[372px] bg-[#535353] border-2 border-t-[6px] border-[#383838] shadow-lg">
            <div class="flex h-[43px] bg-[#434343]">
                <button class="w-[110px] bg-[#535353] font-semibold">Appearance</button>
                <button class="w-[130px] border-x-2 border-b-2 border-[#383838] text-[#a8a8a8] font-semibold">Graphic Styles</button>
                <div class="flex-1 flex items-center justify-end gap-3 pr-2 border-b-2 border-[#383838]">
                    <svg class="w-3.5 h-2.5" viewBox="0 0 14 10"><path d="M1 0l4 5-4 5M8 0l4 5-4 5" fill="none" stroke="#eee" stroke-width="2.400"/></svg>
                    <span class="w-0.5 h-4 bg-[#c4c4c4]"></span>
                    <svg class="w-4 h-3" viewBox="0 0 16 12"><path d="M0 1h16M0 4h16M0 7.500h16M0 11h16" stroke="#b5b5b5" stroke-width="1.200"/></svg>
                </div>
            </div>
            <div class="mx-2 mt-2 h-[179px] flex border-2 border-[#5f5f5f] rounded overflow-hidden">
                <ul class="flex-1 divide-y-2 divide-[#606060]">
                    <li class="h-[38px] flex items-center"><span class="ml-1 w-[29px] h-[29px] bg-[#58595b] border-[3px] border-white outline outline-[#222]"></span><span class="ml-[43px] font-semibold">Path</span></li>
                    <li class="h-[38px] flex items-center"><span class="w-[37px] h-full flex items-center justify-center border-r-2 border-[#3a3a3a] text-[#cacaca]"><svg class="w-5 h-3.5"><use href="#eye"/></svg></span><svg class="ml-2.5 w-3 h-3"><use href="#down"/></svg><span class="ml-4 w-[66px] font-semibold"><span class="border-b border-dotted border-[#ccc]">Stroke:</span></span><svg class="w-[25px] h-[25px]" viewBox="0 0 25 25"><path d="M0 0h25v25H0z" fill="#222"/><path d="M2 2h21v21H2z" fill="#fff"/><path d="M3.500 3.500h18v18h-18z" fill="none" stroke="#222" stroke-width="1.500"/><path d="M6 18 18 6" stroke="#c00d2b" stroke-width="3.500"/></svg></li>
                    <li class="h-[38px] flex items-center"><span class="w-[37px] h-full flex items-center justify-center border-r-2 border-[#3a3a3a] text-[#767676]"><svg class="w-5 h-3.5"><use href="#eye"/></svg></span><span class="ml-[73px] font-semibold"><span class="border-b border-dotted border-[#ccc]">Opacity:</span></span><span class="ml-2">Default</span></li>
                    <li class="h-[38px] flex items-center"><span class="w-[37px] h-full flex items-center justify-center border-r-2 border-[#3a3a3a] text-[#cacaca]"><svg class="w-5 h-3.5"><use href="#eye"/></svg></span><svg class="ml-2.5 w-3 h-3"><use href="#down"/></svg><span class="ml-4 w-[66px] font-semibold">Fill:</span><svg class="w-[25px] h-[25px]" viewBox="0 0 25 25"><path d="M0 0h25v25H0z" fill="#222"/><path d="M2.500 2.500h20v20h-20z" fill="none" stroke="#fff" stroke-width="1.500"/><path d="M5 5h15v15H5z" fill="#58595b" stroke="#fff" stroke-width="1.500"/></svg></li>
                    <li class="h-[38px] flex items-center"><span class="w-[37px] h-full flex items-center justify-center border-r-2 border-[#3a3a3a] text-[#767676]"><svg class="w-5 h-3.5"><use href="#eye"/></svg></span><span class="ml-[73px] font-semibold">Opacity:</span><span class="ml-2">Default</span></li>
                </ul>
                <div class="w-[18px] py-1 flex flex-col items-center bg-[#494949] text-[#999]">
                    <svg class="w-3 h-3"><use href="#up"/></svg>
                    <span class="mt-0.5 w-4 h-[110px] rounded-full bg-[#616161]"></span>
                    <svg class="mt-auto w-3 h-3"><use href="#down"/></svg>
                </div>
            </div>
            <div class="h-[30px] px-4 flex items-center text-[#c4c4c4]">
                <button class="ml-0.5" aria-label="Add stroke"><svg class="w-[18px] h-[18px]" viewBox="0 0 18 18"><path d="M2 2h14v14H2z" fill="none" stroke="currentColor" stroke-width="3.500"/></svg></button>
                <button class="ml-[22px]" aria-label="Add fill"><svg class="w-[18px] h-[18px]" viewBox="0 0 18 18"><path d="M1 1h16v16H1z" fill="none" stroke="currentColor" stroke-width="1.500"/><path d="M3.500 3.500h11v11h-11z" fill="currentColor"/></svg></button>
                <button class="ml-[22px] text-[18px] leading-none italic font-semibold" aria-label="Add effect">fx.</button>
                <button class="ml-auto" aria-label="Clear appearance"><svg class="w-[18px] h-[18px]" viewBox="0 0 18 18"><circle cx="9" cy="9" r="7" fill="none" stroke="currentColor" stroke-width="3"/><path d="M4 4l10 10" stroke="currentColor" stroke-width="3"/></svg></button>
                <button class="ml-6" aria-label="Duplicate item" disabled><svg class="w-4 h-4 text-[#777]" viewBox="0 0 16 16"><path d="M0 0h16v16H8V8H1z" fill="currentColor"/><path d="M1 9l6 6" stroke="currentColor" stroke-width="2"/></svg></button>
                <button class="ml-6 mr-[26px]" aria-label="Delete item"><svg class="w-[18px] h-5" viewBox="0 0 18 20"><path d="M1 4h16M6 4V1h6v3M3 5v14h12V5M7 7v9M11 7v9" fill="none" stroke="currentColor" stroke-width="1.800"/></svg></button>
            </div>
            <div class="h-3 border-t-[3px] border-[#3c3c3c] flex justify-center items-center"><span class="w-7 h-1.5 bg-[repeating-linear-gradient(to_right,#3a3a3a_0_2px,transparent_2px_4px)]"></span></div>
        </section>

        <!-- Color Picker dialog -->
        <form class="absolute left-[1438px] top-[673px] w-[878px] flex flex-col rounded-lg border-2 border-[#1c2024] shadow-[0_4px_22px_8px_rgba(0,0,0,0.6)] overflow-clip text-[18px] text-white" role="dialog" aria-labelledby="picker-title">
            <div class="h-[42px] pl-2.5 flex items-center border border-b-0 border-[#e6eef4] rounded-t-md bg-[linear-gradient(to_right,#b7bfc5_0,#a9b1b8_90px,#7e8a95_150px,#6f7b87_168px,#b9dcfe_180px,#b6dafd_528px,#4b5b6b_538px,#55636f_620px,#84919b_720px,#8f9aa2_100%)]">
                <h2 id="picker-title" class="text-black">Color Picker</h2>
            </div>
            <div class="flex">
                <div class="w-2 border-l border-[#e6eef4] bg-[linear-gradient(to_bottom,#9aa5ad_0,#8896a3_80px,#d5dada_136px,#465463_137px,#465463_386px,#b3d7fb_396px)]"></div>
                <div class="flex-1 bg-[#535353] border-2 border-[#b9cad8] pt-[23px] pl-6 pb-[47px] flex items-start">
                    <div class="w-[391px] shrink-0">
                        <p class="leading-6 text-[#c6c6c6]">Select Color:</p>
                        <div class="mt-3 h-[391px] relative bg-[linear-gradient(to_top,#000,transparent),linear-gradient(to_right,#fff,#005eff)]">
                            <span class="absolute left-0.5 top-[246px] w-[18px] h-[18px] rounded-full border-2 border-white"></span>
                        </div>
                        <label class="mt-[22px] ml-0.5 flex items-center gap-2 leading-6"><input type="checkbox" class="appearance-none w-[18px] h-[18px] border-2 border-[#c8c8c8]">Only Web Colors</label>
                    </div>
                    <div class="ml-4 mt-9 w-16 shrink-0 relative flex justify-center">
                        <div class="w-[39px] h-[391px] bg-[linear-gradient(to_bottom,#f00,#f0f,#00f,#0ff,#0f0,#ff0,#f00)]"></div>
                        <svg class="absolute left-0 top-[150px] w-full h-3" viewBox="0 0 64 12"><path d="M0 0h6l6 5v2l-6 5H0zM64 0h-6l-6 5v2l6 5h6z" fill="#c8c8c8"/></svg>
                    </div>
                    <div class="ml-[18px] mt-[29px] flex flex-col">
                        <div class="flex items-start">
                            <div class="w-24 h-[124px] bg-[#58595b] border border-black"></div>
                            <div class="ml-[21px] w-6 h-[126px] flex flex-col items-center justify-end gap-2.5">
                                <svg class="w-[18px] h-[18px]" viewBox="0 0 18 18"><path d="M9 1l7.500 4v8L9 17l-7.500-4V5zM1.500 5 9 9l7.500-4M9 9v8" fill="#6c6c6c" stroke="#c8c8c8" stroke-width="1.800"/></svg>
                                <span class="w-6 h-6 bg-[#666] border-2 border-[#e4e4e4]"></span>
                            </div>
                            <div class="ml-[21px] flex flex-col gap-1">
                                <button class="w-[156px] h-[41px] rounded-full border-[3px] border-white">OK</button>
                                <button class="w-[156px] h-[41px] rounded-full border-2 border-white">Cancel</button>
                                <button class="w-[156px] h-[41px] rounded-full border-2 border-white">Color Swatches</button>
                            </div>
                        </div>
                        <div id="fields" class="mt-3.5 flex items-end gap-2"></div>
                    </div>
                </div>
                <div class="w-2 border-r-2 border-[#e6eef4] bg-[linear-gradient(to_bottom,#8f9aa2_0,#77848f_80px,#cfd5d9_136px,#4a5969_137px,#4a5969_100%)]"></div>
            </div>
            <div class="h-[9px] border-x border-b-2 border-[#e6eef4] rounded-b-md bg-[linear-gradient(to_right,#b3d7fb_0,#b3d7fb_528px,#4b5b6b_538px,#4b5b6b_100%)]"></div>
        </form>
    </div>

    <script>
        // icon id, label, has flyout
        const toolGroups = [
            [['t-select', 'Selection', 0], ['t-direct', 'Direct Selection', 1], ['t-wand', 'Magic Wand', 0], ['t-lasso', 'Lasso', 0]],
            [['t-pen', 'Pen', 1], ['t-curv', 'Curvature', 0], ['t-type', 'Type', 1], ['t-line', 'Line Segment', 1], ['t-rect', 'Rectangle', 1], ['t-brush', 'Paintbrush', 1], ['t-shaper', 'Shaper', 1], ['t-sciss', 'Scissors', 1]],
            [['t-rotate', 'Rotate', 1], ['t-scale', 'Scale', 1], ['t-width', 'Width', 1], ['t-puppet', 'Puppet Warp', 1], ['t-builder', 'Shape Builder', 1], ['t-persp', 'Perspective Grid', 1]],
            [['t-mesh', 'Mesh', 0], ['t-grad', 'Gradient', 0], ['t-eye', 'Eyedropper', 1], ['t-blend', 'Blend', 0]],
            [['t-spray', 'Symbol Sprayer', 1], ['t-graph', 'Column Graph', 1]],
            [['t-artb', 'Artboard', 0], ['t-slice', 'Slice', 1], ['t-hand', 'Hand', 1], ['t-zoom', 'Zoom', 0]]
        ];
        document.getElementById('tools').innerHTML = toolGroups.map(group => group.map(([icon, label, fly]) => `
            <button aria-label="${label}" class="relative w-full h-[37px] flex items-center justify-center">
                <span class="w-[43px] h-[34px] rounded flex items-center justify-center ${icon === 't-select' ? 'bg-[#303030]' : ''}"><svg class="w-7 h-7 overflow-visible"><use href="#${icon}"/></svg></span>
                ${fly ? '<svg class="absolute right-2 bottom-1.5 w-[5px] h-[5px]" viewBox="0 0 5 5"><path d="M5 0v5H0z" fill="currentColor"/></svg>' : ''}
            </button>`).join('')).join('<div class="h-px mx-1.5 my-[3px] bg-[#484848]"></div>');

        const dockGroups = [
            [['p-guide', 'Color Guide']],
            [['p-swatches', 'Swatches'], ['p-brushes', 'Brushes'], ['p-symbols', 'Symbols']],
            [['p-stroke', 'Stroke'], ['p-transp', 'Transparency']],
            [['p-appear', 'Appearance'], ['p-styles', 'Graphic Sty...']],
            [['p-export', 'Asset Export'], ['p-artboards', 'Artboards']],
            [['p-props', 'Properties'], ['p-libs', 'Libraries']],
            [['p-char', 'Character'], ['p-open', 'OpenType']],
            [['p-transform', 'Transform'], ['p-align', 'Align'], ['p-path', 'Pathfinder'], ['p-para', 'Paragraph']],
            [['p-grad', 'Gradient']],
            [['p-glyphs', 'Glyphs']],
            [['p-layers', 'Layers']],
            [['p-color', 'Color']],
            [['p-pantone', 'PANTONE+...']]
        ];
        document.getElementById('dock').innerHTML = dockGroups.map(group => `
            <div class="pt-1.5 pb-0.5 border-b-2 border-[#3e3e3e] flex flex-col items-center">
                <span class="w-8 h-[5px] mb-[5px] bg-[repeating-linear-gradient(to_right,#3a3a3a_0_2px,transparent_2px_4px)]"></span>
                ${group.map(([icon, label]) => `
                <div class="h-[43px] w-full px-1.5 flex items-center">
                    <button class="w-full h-9 pl-2 flex items-center gap-[13px] rounded whitespace-nowrap font-semibold text-[#f2f2f2] ${icon === 'p-appear' ? 'bg-[#363636] border border-[#606060]' : 'border border-transparent'}"><svg class="w-7 h-7 shrink-0 text-[#c4c4c4]"><use href="#${icon}"/></svg>${label}</button>
                </div>`).join('')}
            </div>`).join('');

        const hsb = [['H', '218°'], ['S', '3%'], ['B', '35%'], ['R', '88'], ['G', '89'], ['B', '91']];
        const cmyk = [['C', '64%'], ['M', '56%'], ['Y', '53%'], ['K', '28%']];
        document.getElementById('fields').innerHTML = `
            <div class="w-36 flex flex-col gap-1.5">
                ${hsb.map(([name, value], i) => `
                <div class="h-8 flex items-center">
                    <input type="radio" name="channel" id="ch-${i}" ${i === 0 ? 'checked' : ''} class="appearance-none w-5 h-5 rounded-full border-2 border-[#c4c4c4] checked:border-[7px]">
                    <label for="ch-${i}" class="ml-1.5 w-[27px]">${name}:</label>
                    <input class="w-[91px] h-8 bg-[#454545] border-2 border-[#5c5c5c] rounded px-1.5 font-['DejaVu_Sans','Noto_Sans',sans-serif] text-[17px] outline-none" aria-label="${name} value" value="${value}">
                </div>`).join('')}
                <div class="h-8 flex items-center">
                    <label for="hex" class="w-[18px] text-[#c6c6c6]">#</label>
                    <div class="relative flex-1 bg-white">
                        <span class="absolute left-2 top-1 w-[68px] h-6 bg-[#3a93f0] border-r-2 border-[#c86a20]"></span>
                        <input id="hex" class="relative w-full h-8 border-2 border-[#4a95e0] px-2 font-['DejaVu_Sans','Noto_Sans',sans-serif] text-[17px] text-white outline-none bg-transparent" value="58595B">
                    </div>
                </div>
            </div>
            <div class="flex flex-col gap-1.5">
                ${cmyk.map(([name, value]) => `
                <div class="h-8 flex items-center">
                    <label for="ink-${name}" class="w-6 mr-1.5 text-right text-[#c6c6c6]">${name}:</label>
                    <input id="ink-${name}" class="w-[91px] h-8 bg-[#454545] border-2 border-[#5c5c5c] rounded px-1.5 font-['DejaVu_Sans','Noto_Sans',sans-serif] text-[17px] outline-none" value="${value}">
                </div>`).join('')}
            </div>`;
    </script>
</body>
</html>
